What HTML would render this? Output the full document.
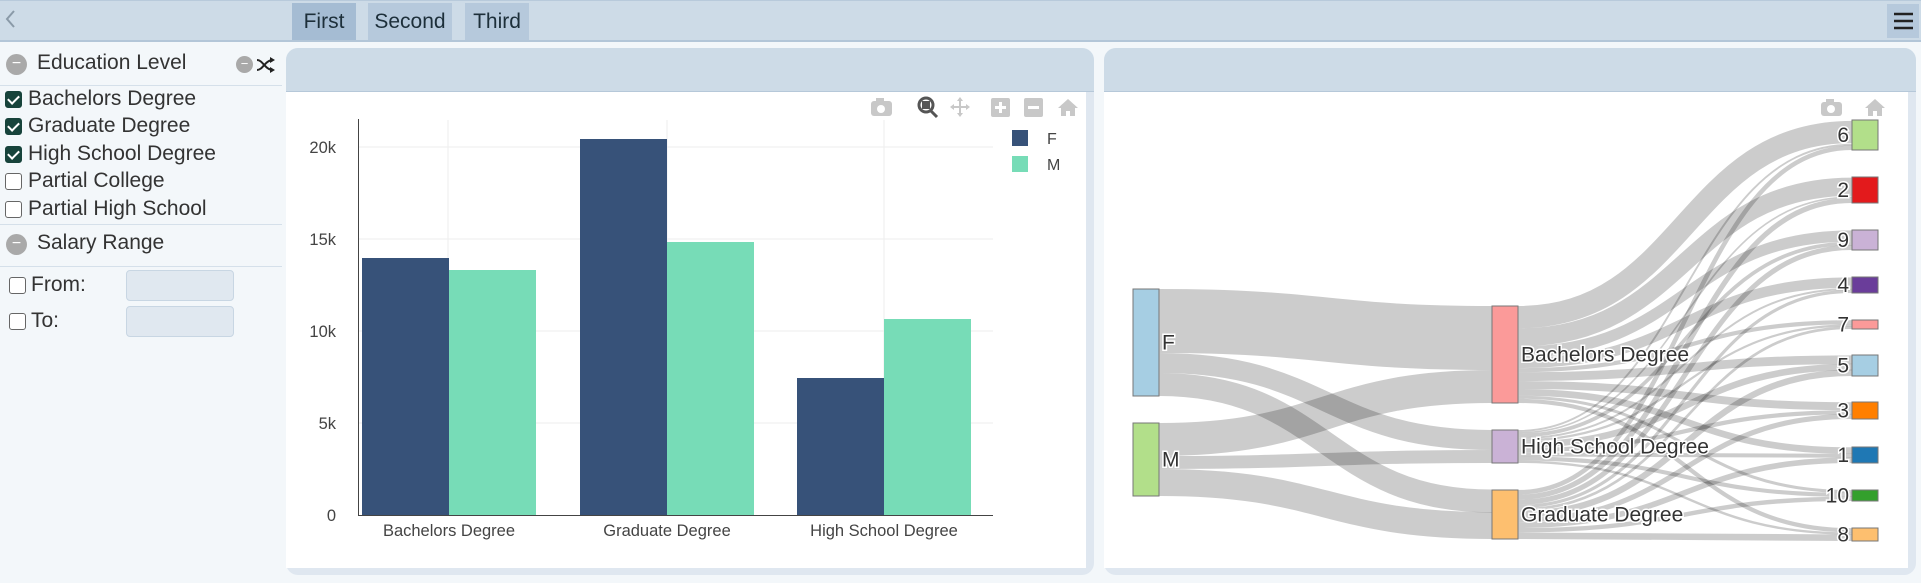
<!DOCTYPE html>
<html><head><meta charset="utf-8"><style>
*{box-sizing:border-box;margin:0;padding:0}
body{width:1921px;height:583px;background:#f3f7fa;font-family:"Liberation Sans",sans-serif;position:relative;overflow:hidden;color:#333}
.abs{position:absolute}
#top{left:0;top:0;width:1921px;height:42px;background:#cddbe7;border-top:1px solid #b8cadb;border-bottom:2px solid #b3c6d8}
.tab{top:3px;height:37px;font-size:21px;line-height:37px;text-align:center;color:#1d2f3a}
.side{font-size:21px;color:#333;white-space:nowrap}
.circ{width:21px;height:21px;border-radius:50%;background:#a9a9a9;color:#fff;font-size:16px;line-height:20px;text-align:center}
.cb{width:17px;height:17px;border-radius:3px;border:1.5px solid #666;background:#fff}
.cb.on{background:#17433b;border-color:#17433b}
.cb.on::after{content:"";position:absolute;left:4px;top:1px;width:5px;height:9px;border:solid #fff;border-width:0 2.5px 2.5px 0;transform:rotate(45deg)}
.sep{height:1px;background:#d5e0ea;left:0;width:282px}
.inp{background:#e0e8f0;border:1px solid #c8d6e3;border-radius:4px}
.panel{background:#dfe7f0;border-radius:12px}
.ph{background:#cddbe7;border-radius:12px 12px 0 0;border-bottom:1px solid #b6c8d9}
</style></head><body>
<div id="top" class="abs"></div>
<svg class="abs" style="left:4px;top:8px" width="14" height="22"><path d="M10 3 L3 11 L10 19" stroke="#8a9aa8" stroke-width="2" fill="none"/></svg>
<div class="abs tab" style="left:292px;width:64px;background:#a5bcd3">First</div>
<div class="abs tab" style="left:368px;width:84px;background:#b6c9dc">Second</div>
<div class="abs tab" style="left:465px;width:64px;background:#b6c9dc">Third</div>
<div class="abs" style="left:1887px;top:4px;width:32px;height:34px;background:#b6c9dc"></div>
<svg class="abs" style="left:1893px;top:11px" width="22" height="20"><g stroke="#222" stroke-width="2.5"><line x1="1" y1="3" x2="20" y2="3"/><line x1="1" y1="10" x2="20" y2="10"/><line x1="1" y1="17" x2="20" y2="17"/></g></svg>

<!-- sidebar -->
<div class="abs circ" style="left:6px;top:54px">−</div>
<div class="abs side" style="left:37px;top:51px">Education Level</div>
<div class="abs circ" style="left:236px;top:56px;width:17px;height:17px;font-size:13px;line-height:16px">−</div>
<svg class="abs" style="left:256px;top:57px" width="20" height="16"><g stroke="#222" stroke-width="2" fill="none"><path d="M1 3 C7 3 9 13 17 13"/><path d="M1 13 C7 13 9 3 17 3"/></g><path d="M14 0 l5 3 l-5 3z M14 10 l5 3 l-5 3z" fill="#222"/></svg>
<div class="abs sep" style="top:85px"></div>
<div class="abs cb on" style="left:5px;top:91px"></div><div class="abs side" style="left:28px;top:87px">Bachelors Degree</div>
<div class="abs cb on" style="left:5px;top:118px"></div><div class="abs side" style="left:28px;top:114px">Graduate Degree</div>
<div class="abs cb on" style="left:5px;top:146px"></div><div class="abs side" style="left:28px;top:142px">High School Degree</div>
<div class="abs cb" style="left:5px;top:173px"></div><div class="abs side" style="left:28px;top:169px">Partial College</div>
<div class="abs cb" style="left:5px;top:201px"></div><div class="abs side" style="left:28px;top:197px">Partial High School</div>
<div class="abs sep" style="top:224px"></div>
<div class="abs circ" style="left:6px;top:234px">−</div>
<div class="abs side" style="left:37px;top:231px">Salary Range</div>
<div class="abs sep" style="top:266px"></div>
<div class="abs cb" style="left:9px;top:277px"></div><div class="abs side" style="left:31px;top:273px">From:</div>
<div class="abs inp" style="left:126px;top:270px;width:108px;height:31px"></div>
<div class="abs cb" style="left:9px;top:313px"></div><div class="abs side" style="left:31px;top:309px">To:</div>
<div class="abs inp" style="left:126px;top:306px;width:108px;height:31px"></div>

<!-- left panel -->
<div class="abs panel" style="left:286px;top:48px;width:808px;height:527px"></div>
<div class="abs ph" style="left:286px;top:48px;width:808px;height:44px"></div>
<div class="abs" style="left:286px;top:92px;width:800px;height:476px;background:#fff"></div>
<!-- right panel -->
<div class="abs panel" style="left:1104px;top:48px;width:812px;height:527px"></div>
<div class="abs ph" style="left:1104px;top:48px;width:812px;height:44px"></div>
<div class="abs" style="left:1104px;top:92px;width:804px;height:476px;background:#fff"></div>

<svg class="abs" style="left:0;top:0" width="1921" height="583" font-family="Liberation Sans, sans-serif">
<g stroke="#eee" stroke-width="1">
<line x1="358" x2="993" y1="147" y2="147"/><line x1="358" x2="993" y1="239" y2="239"/><line x1="358" x2="993" y1="331" y2="331"/><line x1="358" x2="993" y1="423" y2="423"/>
<line x1="448" x2="448" y1="120" y2="515"/><line x1="667" x2="667" y1="120" y2="515"/><line x1="884" x2="884" y1="120" y2="515"/>
</g>
<rect x="362" y="258" width="87" height="257" fill="#375279"/>
<rect x="449" y="270" width="87" height="245" fill="#77dcb7"/>
<rect x="580" y="139" width="87" height="376" fill="#375279"/>
<rect x="667" y="242" width="87" height="273" fill="#77dcb7"/>
<rect x="797" y="378" width="87" height="137" fill="#375279"/>
<rect x="884" y="319" width="87" height="196" fill="#77dcb7"/>
<line x1="358.5" x2="358.5" y1="119" y2="516" stroke="#444"/>
<line x1="358" x2="993" y1="515.5" y2="515.5" stroke="#444"/>
<g font-size="16.5" fill="#444" text-anchor="end">
<text x="336" y="153">20k</text><text x="336" y="245">15k</text><text x="336" y="337">10k</text><text x="336" y="429">5k</text><text x="336" y="521">0</text>
</g>
<g font-size="16.5" fill="#444" text-anchor="middle">
<text x="449" y="536">Bachelors Degree</text><text x="667" y="536">Graduate Degree</text><text x="884" y="536">High School Degree</text>
</g>
<rect x="1012" y="130" width="16" height="16" fill="#375279"/><text x="1047" y="144" font-size="16" fill="#444">F</text>
<rect x="1012" y="156" width="16" height="16" fill="#77dcb7"/><text x="1047" y="170" font-size="16" fill="#444">M</text>
<g fill="#c8c8c8">
<rect x="871" y="101" width="21" height="15" rx="3"/><rect x="876" y="98" width="8" height="4"/>
<rect x="991" y="98" width="19" height="19" rx="2"/><rect x="1024" y="98" width="19" height="19" rx="2"/>
<path d="M1058 108 l10 -9 l10 9 l-3 0 l0 8 l-5 0 l0 -5 l-4 0 l0 5 l-5 0 l0 -8z"/>
<path d="M960 97 l3 4 l-2 0 l0 5 l5 0 l0 -2 l4 3 l-4 3 l0 -2 l-5 0 l0 5 l2 0 l-3 4 l-3 -4 l2 0 l0 -5 l-5 0 l0 2 l-4 -3 l4 -3 l0 2 l5 0 l0 -5 l-2 0z"/>
</g>
<circle cx="881" cy="109" r="4" fill="#fff"/>
<circle cx="926" cy="105" r="7" fill="none" stroke="#555" stroke-width="3"/><rect x="922" y="101" width="8" height="8" fill="#555"/>
<line x1="931" y1="111" x2="937" y2="117" stroke="#555" stroke-width="3"/>
<g stroke="#fff" stroke-width="3"><line x1="995" y1="107.5" x2="1006" y2="107.5"/><line x1="1000.5" y1="102" x2="1000.5" y2="113"/><line x1="1028" y1="107.5" x2="1039" y2="107.5"/></g>
<rect x="1821" y="102" width="21" height="14" rx="3" fill="#c8c8c8"/><rect x="1826" y="99" width="8" height="4" fill="#c8c8c8"/><circle cx="1831" cy="109" r="4" fill="#fff"/>
<path d="M1865 108 l10 -9 l10 9 l-3 0 l0 8 l-5 0 l0 -5 l-4 0 l0 5 l-5 0 l0 -8z" fill="#c8c8c8"/>
<g id="links" fill="none" stroke="#000" stroke-opacity="0.2"></g>
<g id="nodes"></g>
</svg>
<script>
var L=document.getElementById('links'),N=document.getElementById('nodes'),ns='http://www.w3.org/2000/svg';
function link(x0,y0a,y0b,x1,y1a,y1b){var w=y0b-y0a,y0=(y0a+y0b)/2,y1=(y1a+y1b)/2,xm=(x0+x1)/2;
var p=document.createElementNS(ns,'path');p.setAttribute('d','M'+x0+' '+y0+' C'+xm+' '+y0+' '+xm+' '+y1+' '+x1+' '+y1);p.setAttribute('stroke-width',Math.max(w,1));L.appendChild(p);}
link(1159,289,353,1492,306,370);link(1159,353,373,1492,430,450);link(1159,373,396,1492,490,512);
link(1159,423,456,1492,370,403);link(1159,456,469,1492,450,463);link(1159,469,496,1492,512,539);
var R=[[6,120,150],[2,177,203],[9,230,250],[4,277,293],[7,320,329],[5,355,376],[3,402,419],[1,447,463],[10,490,501],[8,528,541]];
var share=[[.8,.05,.15],[.75,.05,.2],[.6,.15,.25],[.7,.1,.2],[.5,.2,.3],[.45,.25,.3],[.5,.2,.3],[.45,.2,.35],[.3,.3,.4],[.35,.15,.5]];
var mids=[[306,403],[430,463],[490,539]],cur=[306,430,490];
for(var i=0;i<R.length;i++){var y=R[i][1],h=R[i][2]-R[i][1];for(var m=0;m<3;m++){var tot=mids[m][1]-mids[m][0];var sum=0;for(var k=0;k<R.length;k++)sum+=(R[k][2]-R[k][1])*share[k][m];var w=h*share[i][m]*tot/sum;var wr=h*share[i][m];link(1518,cur[m],cur[m]+w,1852,y,y+wr);cur[m]+=w;y+=wr;}}
function node(x,y1,y2,c,lab,right){var r=document.createElementNS(ns,'rect');r.setAttribute('x',x);r.setAttribute('y',y1);r.setAttribute('width',26);r.setAttribute('height',y2-y1);r.setAttribute('fill',c);r.setAttribute('stroke','#777');r.setAttribute('stroke-width','1');N.appendChild(r);
var t=document.createElementNS(ns,'text');t.textContent=lab;t.setAttribute('y',(y1+y2)/2+7);t.setAttribute('font-size','21');t.setAttribute('fill','#333');t.setAttribute('stroke','#fff');t.setAttribute('stroke-width','3');t.setAttribute('paint-order','stroke');
if(right){t.setAttribute('x',x+29);}else{t.setAttribute('x',x-3);t.setAttribute('text-anchor','end');}N.appendChild(t);}
node(1133,289,396,'#a6cee3','F',1);node(1133,423,496,'#b2df8a','M',1);
node(1492,306,403,'#fb9a99','Bachelors Degree',1);node(1492,430,463,'#cab2d6','High School Degree',1);node(1492,490,539,'#fdbf6f','Graduate Degree',1);
var cols={6:'#b2df8a',2:'#e31a1c',9:'#cab2d6',4:'#6a3d9a',7:'#fb9a99',5:'#a6cee3',3:'#ff7f00',1:'#1f78b4',10:'#33a02c',8:'#fdbf6f'};
R.forEach(function(r){node(1852,r[1],r[2],cols[r[0]],String(r[0]),0);});
</script>
</body></html>
